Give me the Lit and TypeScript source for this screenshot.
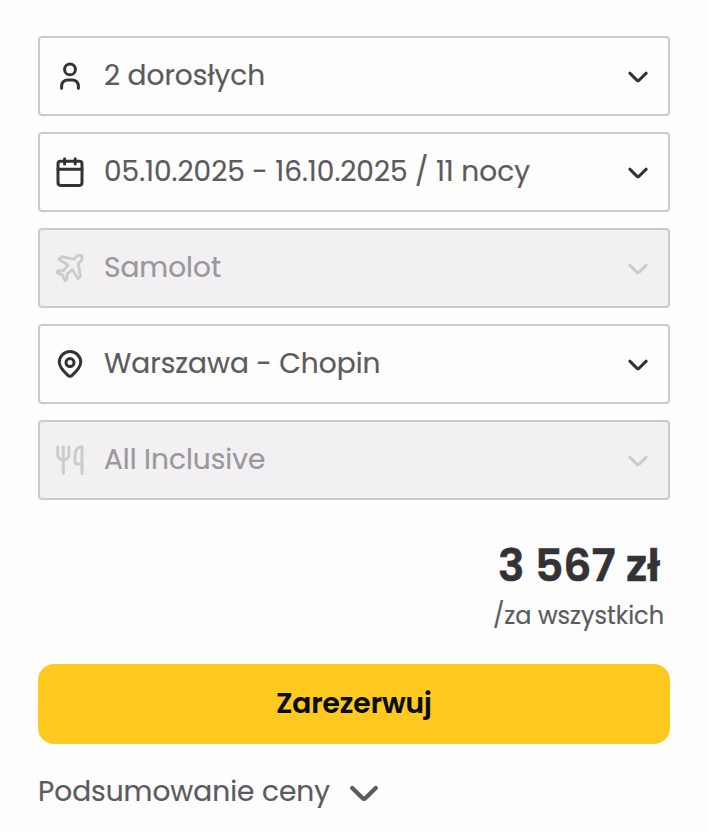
import { css, html, svg, LitElement, SVGTemplateResult } from "lit";
import { customElement, property } from "lit/decorators.js";
import { classMap } from "lit/directives/class-map.js";

type IconName = "person" | "calendar" | "plane" | "pin" | "cutlery" | "chevron";

interface Field {
  key: string;
  icon: IconName;
  label: string;
  disabled?: boolean;
}

const icons: Record<IconName, SVGTemplateResult> = {
  person: svg`
    <circle cx="16" cy="9.4" r="5.4" />
    <path d="M7.6 28.2v-2.3a6 6 0 0 1 6-6h4.8a6 6 0 0 1 6 6v2.3" />
  `,
  calendar: svg`
    <rect x="4" y="5.2" width="24" height="24.2" rx="2.6" />
    <path d="M4 13.2h24M10.6 2.7v5.4M21.2 2.7v5.4" />
  `,
  plane: svg`
    <path d="M27.7 4c-1.7-1-3.7-.8-5.2.6l-2.600 2.5L7.5 4.800 5 7.300l9 5.600-4.200 5.500-5.600.4-1.200 1.700 5.600 2.600 2.500 5.600 1.700-1.200.4-5.600 5.200-4.200 5.600 9 2.500-2.500-2.300-12.400 2.500-2.600c1.400-1.500 1.800-3.500 1-5.200z" />
  `,
  pin: svg`
    <path d="M16 28.3c-1 0-1.700-.5-2.400-1.200C9.700 23.400 5.300 19.300 5.300 14.200a10.700 10.700 0 0 1 21.400 0c0 5.100-4.400 9.200-8.300 12.900-.7.700-1.400 1.200-2.400 1.200z" />
    <circle cx="16" cy="14.6" r="4" />
  `,
  cutlery: svg`
    <path d="M3.700 2.700v7.800a5.600 5.600 0 0 0 11.200 0v-7.800M9.300 2.700v26.700" />
    <path d="M28 29.400v-26.700c-4.800 0-7 4-7 9v5.200c0 2 1 3 3 3h4" />
  `,
  chevron: svg`<path d="M7.8 13.200l7.300 7.100a1.300 1.300 0 0 0 1.800 0l7.300-7.100" />`,
};

const fields: Field[] = [
  { key: "guests", icon: "person", label: "2 dorosłych" },
  { key: "dates", icon: "calendar", label: "05.10.2025 - 16.10.2025 / 11 nocy" },
  { key: "transport", icon: "plane", label: "Samolot", disabled: true },
  { key: "airport", icon: "pin", label: "Warszawa - Chopin" },
  { key: "board", icon: "cutlery", label: "All Inclusive", disabled: true },
];

@customElement("ui-icon")
export class UiIcon extends LitElement {
  @property()
  name: IconName = "chevron";

  static styles = css`
    :host {
      display: block;
      flex: none;
      width: 32px;
      height: 32px;
    }
    svg {
      display: block;
      width: 100%;
      height: 100%;
      fill: none;
      stroke: currentColor;
      stroke-width: 3;
      stroke-linecap: round;
      stroke-linejoin: round;
    }
  `;

  render() {
    return html`<svg viewBox="0 0 32 32" aria-hidden="true">${icons[this.name]}</svg>`;
  }
}

@customElement("app-root")
export class AppRoot extends LitElement {
  static styles = css`
    :host {
      display: block;
      box-sizing: border-box;
      height: 832px;
      padding: 36px 38px 0;
      overflow: hidden;
      background: #fdfdfd;
      color: #5b5b5d;
      font-family: Poppins, "Noto Sans", sans-serif;
      font-size: 28px;
      -webkit-text-stroke: 0.2px currentColor;
    }
    .fields {
      display: flex;
      flex-direction: column;
      gap: 16px;
    }
    .field {
      display: flex;
      align-items: center;
      box-sizing: border-box;
      width: 100%;
      height: 80px;
      padding: 0 14px;
      border: 2px solid #cbcbcb;
      border-radius: 4px;
      background: #fefefe;
      color: inherit;
      font: inherit;
      text-align: left;
    }
    .field ui-icon {
      color: #333235;
    }
    .field.disabled {
      background: #f2f0f3;
      color: #9a989b;
    }
    .field.disabled ui-icon {
      color: #cdcbce;
    }
    .label {
      flex: 1;
      margin-left: 18px;
      line-height: 36px;
      white-space: nowrap;
    }
    .price {
      display: flex;
      flex-direction: column;
      align-items: flex-end;
      margin-top: 36px;
    }
    .amount {
      margin-right: 10px;
      color: #333235;
      font-size: 44px;
      font-weight: 600;
      line-height: 60px;
      -webkit-text-stroke-width: 0.6px;
    }
    .unit {
      margin-right: 6px;
      font-size: 24px;
      line-height: 40px;
    }
    .book {
      display: block;
      width: 100%;
      height: 80px;
      margin-top: 28px;
      padding: 0;
      border: 0;
      border-radius: 16px;
      background: #ffc920;
      color: #080d12;
      font: inherit;
      font-weight: 600;
    }
    .summary {
      display: flex;
      align-items: center;
      gap: 11px;
      margin-top: 25px;
      line-height: 40px;
    }
    .summary ui-icon {
      width: 46px;
      height: 46px;
    }
  `;

  render() {
    return html`
      <div class="fields">${fields.map((field) => this.renderField(field))}</div>
      <div class="price">
        <div class="amount">3 567 zł</div>
        <div class="unit">/za wszystkich</div>
      </div>
      <button class="book">Zarezerwuj</button>
      <div class="summary">
        <span class="summary-label">Podsumowanie ceny</span>
        <ui-icon name="chevron"></ui-icon>
      </div>
    `;
  }

  renderField(field: Field) {
    return html`
      <button
        class=${classMap({ field: true, [field.key]: true, disabled: !!field.disabled })}
        ?disabled=${field.disabled}
      >
        <ui-icon name=${field.icon}></ui-icon>
        <span class="label">${field.label}</span>
        <ui-icon name="chevron"></ui-icon>
      </button>
    `;
  }
}
